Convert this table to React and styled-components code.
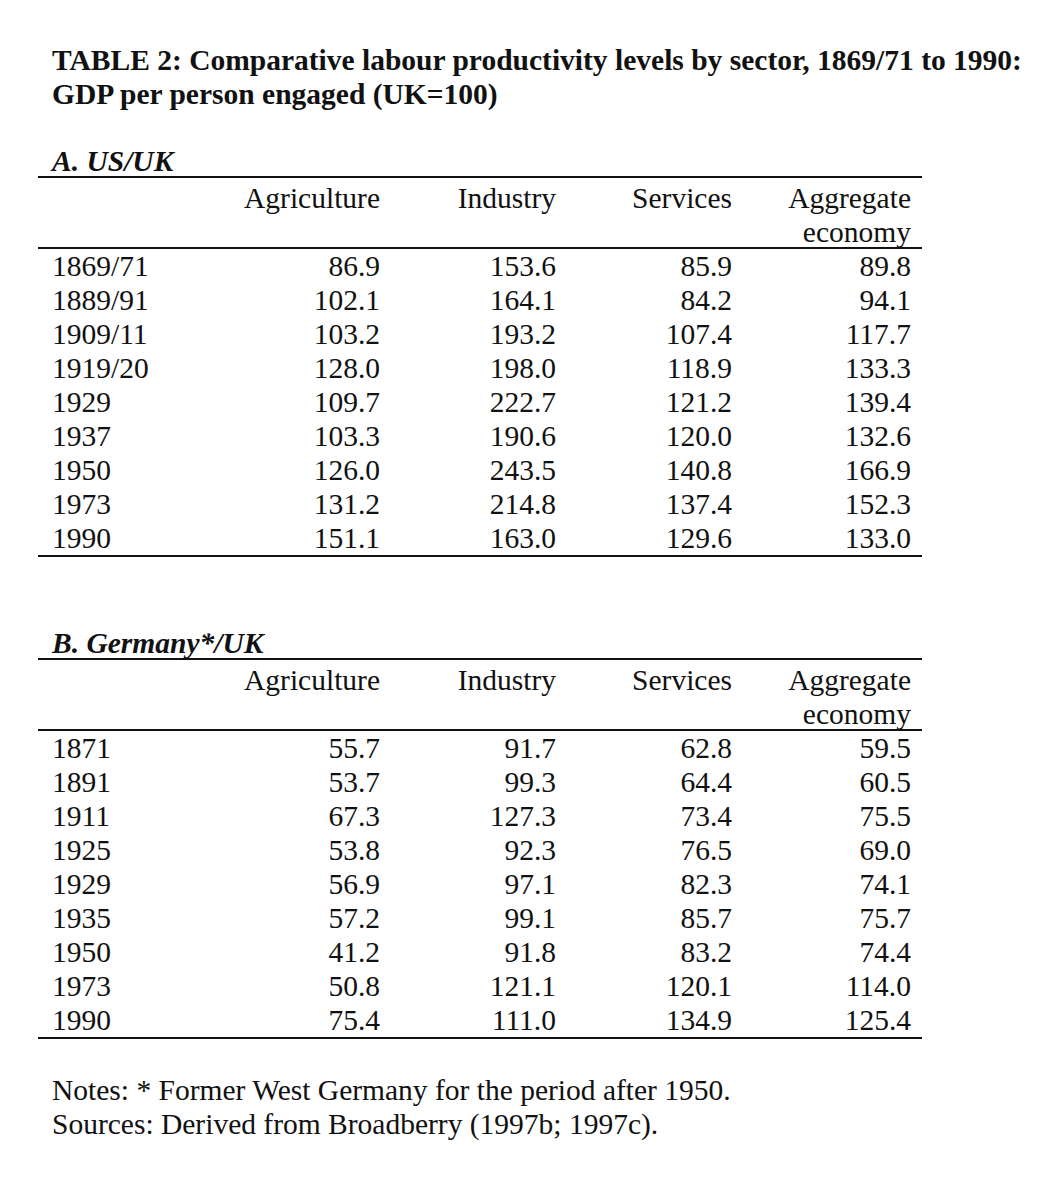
import styled, { createGlobalStyle } from "styled-components";

const GlobalStyle = createGlobalStyle`
  body {
    margin: 0;
    background: #fff;
    color: #111;
    font-family: "Liberation Serif", "Times New Roman", serif;
  }
`;

const Page = styled.div`
  width: 1052px;
  min-height: 1178px;
  padding: 43px 0 0 38px;
  box-sizing: border-box;
`;

const Title = styled.h1`
  margin: 0 0 35px 14px;
  font-size: 29.5px;
  line-height: 34px;
  font-weight: bold;
  white-space: nowrap;
`;

const Section = styled.section`
  width: 884px;
  margin-bottom: ${(p) => p.gap || 0}px;
`;

const Label = styled.div`
  padding-left: 14px;
  font-size: 29.5px;
  line-height: 30px;
  font-weight: bold;
  font-style: italic;
  border-bottom: 2px solid #111;
`;

const Grid = styled.div`
  display: grid;
  grid-template-columns: 150px 178px 176px 176px 179px;
  padding: 0 11px 0 14px;
  font-size: 29.5px;
`;

const Header = styled(Grid)`
  height: 71px;
  align-items: start;
  border-bottom: 2px solid #111;
  line-height: 34px;
  padding-top: 3px;
  box-sizing: border-box;
`;

const Body = styled(Grid)`
  grid-auto-rows: 34px;
  line-height: 34px;
  border-bottom: 2px solid #111;
`;

const Cell = styled.div`
  text-align: ${(p) => (p.left ? "left" : "right")};
  white-space: nowrap;
`;

const Notes = styled.div`
  margin: 34px 0 0 14px;
  font-size: 29.5px;
  line-height: 34px;
`;

const usuk = [
  ["1869/71", "86.9", "153.6", "85.9", "89.8"],
  ["1889/91", "102.1", "164.1", "84.2", "94.1"],
  ["1909/11", "103.2", "193.2", "107.4", "117.7"],
  ["1919/20", "128.0", "198.0", "118.9", "133.3"],
  ["1929", "109.7", "222.7", "121.2", "139.4"],
  ["1937", "103.3", "190.6", "120.0", "132.6"],
  ["1950", "126.0", "243.5", "140.8", "166.9"],
  ["1973", "131.2", "214.8", "137.4", "152.3"],
  ["1990", "151.1", "163.0", "129.6", "133.0"],
];

const deuk = [
  ["1871", "55.7", "91.7", "62.8", "59.5"],
  ["1891", "53.7", "99.3", "64.4", "60.5"],
  ["1911", "67.3", "127.3", "73.4", "75.5"],
  ["1925", "53.8", "92.3", "76.5", "69.0"],
  ["1929", "56.9", "97.1", "82.3", "74.1"],
  ["1935", "57.2", "99.1", "85.7", "75.7"],
  ["1950", "41.2", "91.8", "83.2", "74.4"],
  ["1973", "50.8", "121.1", "120.1", "114.0"],
  ["1990", "75.4", "111.0", "134.9", "125.4"],
];

const DataTable = ({ label, rows, gap }) => (
  <Section gap={gap}>
    <Label>{label}</Label>
    <Header>
      <Cell left />
      <Cell>Agriculture</Cell>
      <Cell>Industry</Cell>
      <Cell>Services</Cell>
      <Cell>
        Aggregate
        <br />
        economy
      </Cell>
    </Header>
    <Body>
      {rows.map((r) =>
        r.map((v, i) => (
          <Cell key={r[0] + i} left={i === 0}>
            {v}
          </Cell>
        ))
      )}
    </Body>
  </Section>
);

export default function App() {
  return (
    <Page>
      <GlobalStyle />
      <Title>
        TABLE 2: Comparative labour productivity levels by sector, 1869/71 to 1990:
        <br />
        GDP per person engaged (UK=100)
      </Title>
      <DataTable label="A. US/UK" rows={usuk} gap={71} />
      <DataTable label="B. Germany*/UK" rows={deuk} />
      <Notes>
        Notes: * Former West Germany for the period after 1950.
        <br />
        Sources: Derived from Broadberry (1997b; 1997c).
      </Notes>
    </Page>
  );
}
